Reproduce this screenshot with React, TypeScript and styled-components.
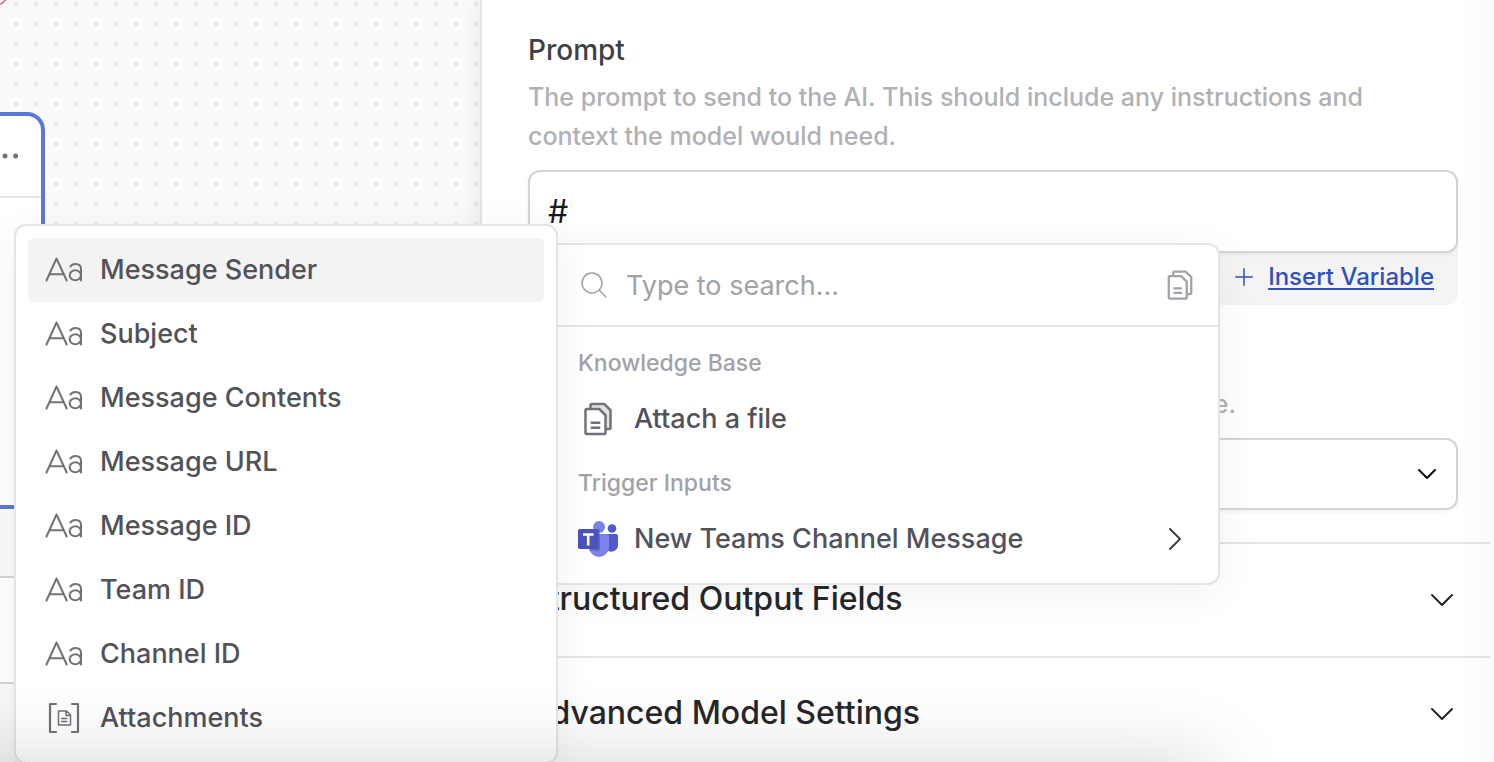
import React from 'react';
import styled, { createGlobalStyle } from 'styled-components';
import { ChevronDown } from 'lucide-react';
import {
  PiCaretDown,
  PiCaretRight,
  PiDotsThreeBold,
  PiFiles,
  PiFilesDuotone,
  PiMagnifyingGlassLight,
  PiPlus,
} from 'react-icons/pi';

const GlobalStyle = createGlobalStyle`
  *, *::before, *::after { box-sizing: border-box; }
  body { margin: 0; font-family: Inter, 'Open Sans', sans-serif; background: #fafafa; }
  button, input, select, textarea { font: inherit; }
  h2, p { margin: 0; }
  svg { display: block; flex: none; }
`;

const Page = styled.div`
  position: relative;
  display: flex;
  height: 100vh;
  overflow: hidden;
`;

const Canvas = styled.main`
  position: relative;
  flex: 0 0 480px;
  overflow: hidden;
  background-color: #fafafa;
  background-image: radial-gradient(circle at 16px 4px, #ebebeb 2px, transparent 3px);
  background-size: 20px 20px;
`;

const Node = styled.section<{ $top: number; $selected?: boolean }>`
  position: absolute;
  top: ${(p) => p.$top}px;
  right: calc(100% - 45px);
  width: 400px;
  background: #fff;
  border: ${(p) => (p.$selected ? '4px solid #5b78d9' : '2px solid #d4d4d8')};
  border-radius: 18px;
`;

const NodeHeader = styled.header`
  display: flex;
  justify-content: flex-end;
  align-items: center;
  height: 82px;
  padding-right: 16px;
  border-bottom: 2px solid #e4e4e7;
`;

const NodeBody = styled.div<{ $height: number }>`
  height: ${(p) => p.$height}px;
`;

const IconButton = styled.button`
  display: flex;
  padding: 0;
  border: 0;
  background: none;
  color: #71717a;
`;

const StatusRing = styled.svg`
  position: absolute;
  top: 0;
  left: 0;
`;

const Panel = styled.aside`
  position: relative;
  flex: 1;
  min-width: 0;
  padding-right: 4px;
  background: #fff;
  border-left: 2px solid #e4e4e4;
  box-shadow: 0 0 24px rgba(0, 0, 0, 0.08);

  &::after {
    content: '';
    position: absolute;
    inset: 0 0 0 auto;
    width: 36px;
    background: linear-gradient(to right, rgba(0, 0, 0, 0), rgba(0, 0, 0, 0.02));
    pointer-events: none;
  }
`;

const Fields = styled.div`
  display: flex;
  flex-direction: column;
  height: 542px;
  padding: 30px 32px 32px 46px;
`;

const Label = styled.label`
  font-size: 28px;
  line-height: 40px;
  font-weight: 500;
  color: #3f3f46;
`;

const Description = styled.p`
  max-width: 900px;
  margin-top: 8px;
  font-size: 25px;
  line-height: 39px;
  font-weight: 500;
  color: #b0b0b6;
`;

const PromptInput = styled.input`
  position: relative;
  height: 83px;
  margin-top: 14px;
  padding: 0 18px;
  border: 2px solid #d4d4d8;
  border-radius: 12px;
  outline: 0;
  background: #fff;
  color: #18181b;
  font-size: 32px;
  box-shadow: 0 2px 4px rgba(0, 0, 0, 0.05);
`;

const PromptFooter = styled.div`
  display: flex;
  justify-content: flex-end;
  align-items: center;
  gap: 12px;
  height: 64px;
  margin-top: -12px;
  padding: 8px 24px 0;
  border-radius: 0 0 12px 12px;
  background: #f4f4f4;
  color: #3050be;
`;

const InsertLink = styled.a`
  color: inherit;
  font-size: 24px;
  line-height: 32px;
  font-weight: 500;
  text-decoration: underline;
  text-decoration-thickness: 2px;
  text-underline-offset: 3px;
`;

const ModelHint = styled.p`
  margin-top: 80px;
  padding-right: 222px;
  text-align: right;
  font-size: 25px;
  line-height: 39px;
  font-weight: 500;
  color: #b0b0b6;
`;

const SelectWrap = styled.div`
  position: relative;
  display: flex;
  align-items: center;
  margin-top: 14px;

  svg {
    position: absolute;
    right: 15px;
    color: #09090b;
    pointer-events: none;
  }
`;

const Select = styled.select`
  appearance: none;
  width: 100%;
  height: 72px;
  border: 2px solid #d4d4d8;
  border-radius: 12px;
  background: #fff;
  box-shadow: 0 2px 4px rgba(0, 0, 0, 0.05);
`;

const Accordion = styled.button`
  display: flex;
  justify-content: space-between;
  align-items: center;
  width: 100%;
  height: 114px;
  padding: 0 32px 2px 46px;
  border: 0;
  border-top: 2px solid #e4e4e4;
  background: none;
  color: #27272a;
  font-size: 32px;
  line-height: 40px;
  font-weight: 500;
`;

const Menu = styled.div`
  position: absolute;
  background: #fff;
  border: 2px solid #e4e4e4;
  border-radius: 12px;
`;

const PickerMenu = styled(Menu)`
  top: 243px;
  left: 542px;
  width: 678px;
  box-shadow: 0 8px 40px rgba(0, 0, 0, 0.06);
`;

const FieldMenu = styled(Menu)`
  top: 224px;
  left: 14px;
  width: 544px;
  padding: 12px;
  box-shadow: 0 8px 40px rgba(0, 0, 0, 0.06);
`;

const SearchRow = styled.label`
  display: flex;
  align-items: center;
  gap: 16px;
  height: 82px;
  padding: 0 20px 0 34px;
  border-bottom: 2px solid #e4e4e4;
  color: #a1a1aa;
`;

const SearchInput = styled.input`
  flex: 1;
  min-width: 0;
  padding: 0;
  border: 0;
  outline: 0;
  background: none;
  font-size: 27px;

  &::placeholder {
    color: #a1a1aa;
    opacity: 1;
  }
`;

const PickerBody = styled.div`
  padding: 8px 16px 8px 22px;
`;

const GroupTitle = styled.h2`
  padding: 8px 12px 0;
  font-size: 23px;
  line-height: 40px;
  font-weight: 500;
  color: #a1a1aa;
`;

const MenuItem = styled.button<{ $active?: boolean }>`
  display: flex;
  align-items: center;
  gap: 16px;
  width: 100%;
  height: 64px;
  padding: 0 16px;
  border: 0;
  border-radius: 6px;
  background: ${(p) => (p.$active ? '#f3f3f3' : 'transparent')};
  color: #52525b;
  font-size: 27px;
  line-height: 40px;
  font-weight: 500;
  text-align: left;

  > svg:first-child {
    color: #71717a;
  }
`;

const PickerItem = styled(MenuItem)`
  height: 72px;
  padding: 0 12px;

  > svg:last-child {
    margin-left: auto;
    color: #3f3f46;
  }
`;

const BottomShade = styled.div`
  position: absolute;
  top: 100%;
  left: -100px;
  right: 284px;
  height: 200px;
  box-shadow: 0 0 80px rgba(0, 0, 0, 0.17);
  pointer-events: none;
`;

const TextIcon = () => (
  <svg width="40" height="40" viewBox="0 0 40 40" fill="none" stroke="currentColor" strokeWidth="2" strokeLinecap="round" strokeLinejoin="round" aria-hidden="true">
    <path d="M2.500 30.500 12.500 8.500 22.700 30.500M5.500 24.200h14" />
    <path d="M26.500 16.500c1-1.800 2.600-2.600 5-2.600 3.500 0 5.500 1.800 5.500 5.200v11.400" />
    <ellipse cx="31.300" cy="25.300" rx="5.600" ry="5" />
  </svg>
);

const AttachmentsIcon = () => (
  <svg width="40" height="40" viewBox="0 0 40 40" fill="none" stroke="currentColor" strokeLinecap="round" strokeLinejoin="round" aria-hidden="true">
    <path d="M12 6H6v28h6M28 6h6v28h-6" strokeWidth="2.2" />
    <path d="M14.500 13h8l4 4v10h-12zM22 13v4.500h4.500" strokeWidth="1.500" />
    <path d="M17.500 20.500h5.500M17.500 23.500h5.500" strokeWidth="1.300" />
  </svg>
);

const TeamsLogo = () => (
  <svg width="40" height="40" viewBox="0 0 40 40" aria-hidden="true">
    <circle cx="34" cy="9.500" r="4.300" fill="#5059c9" />
    <path d="M29 15h9.200a1.800 1.800 0 0 1 1.800 1.800v9.200a6.700 6.700 0 0 1-11 5z" fill="#5059c9" />
    <circle cx="21" cy="8" r="6" fill="#7b83eb" />
    <path d="M12 15h17.200a1.800 1.800 0 0 1 1.800 1.800v11.200a10 10 0 0 1-20 0V16z" fill="#7b83eb" />
    <path d="M11 10h9.500a1.500 1.500 0 0 1 1.500 1.500v18a2 2 0 0 1-2 2h-8.500z" fill="#3d4499" opacity=".45" />
    <rect x="0" y="10" width="20.500" height="20" rx="1.800" fill="#4b53bc" />
    <path d="M5 15.500h10.500M10.200 15.500v11" stroke="#fff" strokeWidth="2.600" />
  </svg>
);

const textFields = [
  'Message Sender',
  'Subject',
  'Message Contents',
  'Message URL',
  'Message ID',
  'Team ID',
  'Channel ID',
];

export default function App() {
  return (
    <Page>
      <GlobalStyle />
      <Canvas>
        <StatusRing width="12" height="8" viewBox="0 0 12 8" aria-hidden="true">
          <circle cx="-6" cy="-9" r="14.500" fill="none" stroke="#e5676b" strokeWidth="1.500" />
        </StatusRing>
        <Node $top={112} $selected>
          <NodeHeader>
            <IconButton aria-label="Node options">
              <PiDotsThreeBold size={40} />
            </IconButton>
          </NodeHeader>
          <NodeBody $height={307} />
        </Node>
        <Node $top={576}>
          <NodeBody $height={104} />
        </Node>
      </Canvas>

      <Panel>
        <Fields>
          <Label htmlFor="prompt">Prompt</Label>
          <Description>
            The prompt to send to the AI. This should include any instructions and context the model would need.
          </Description>
          <PromptInput id="prompt" defaultValue="#" />
          <PromptFooter>
            <PiPlus size={24} />
            <InsertLink href="#variables">Insert Variable</InsertLink>
          </PromptFooter>
          <ModelHint>e.</ModelHint>
          <SelectWrap>
            <Select aria-label="Model" />
            <ChevronDown size={32} strokeWidth={1.5} />
          </SelectWrap>
        </Fields>
        <Accordion>
          Structured Output Fields
          <PiCaretDown size={32} />
        </Accordion>
        <Accordion>
          Advanced Model Settings
          <PiCaretDown size={32} />
        </Accordion>
      </Panel>

      <PickerMenu>
        <SearchRow>
          <PiMagnifyingGlassLight size={32} />
          <SearchInput placeholder="Type to search..." aria-label="Search variables" />
          <PiFiles size={36} />
        </SearchRow>
        <PickerBody>
          <GroupTitle>Knowledge Base</GroupTitle>
          <PickerItem>
            <PiFilesDuotone size={40} />
            <span>Attach a file</span>
          </PickerItem>
          <GroupTitle>Trigger Inputs</GroupTitle>
          <PickerItem>
            <TeamsLogo />
            <span>New Teams Channel Message</span>
            <PiCaretRight size={32} />
          </PickerItem>
        </PickerBody>
      </PickerMenu>

      <FieldMenu>
        {textFields.map((name, i) => (
          <MenuItem key={name} $active={i === 0}>
            <TextIcon />
            {name}
          </MenuItem>
        ))}
        <MenuItem>
          <AttachmentsIcon />
          Attachments
        </MenuItem>
      </FieldMenu>

      <BottomShade />
    </Page>
  );
}
